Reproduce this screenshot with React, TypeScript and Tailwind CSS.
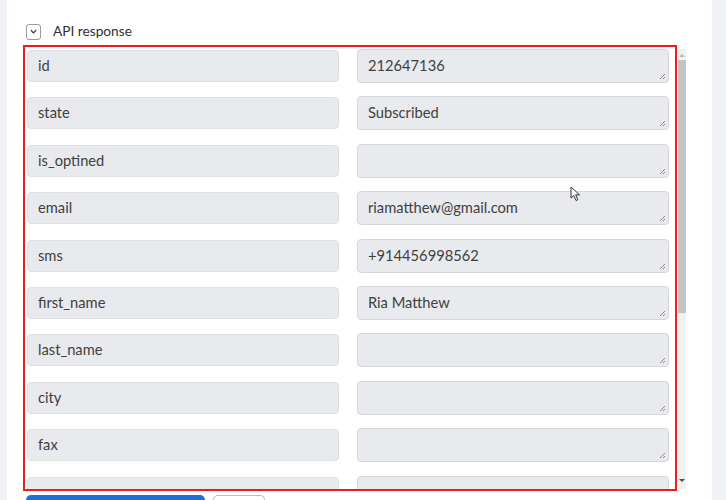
import React from "react";

const rows: [string, string][] = [
  ["id", "212647136"],
  ["state", "Subscribed"],
  ["is_optined", ""],
  ["email", "riamatthew@gmail.com"],
  ["sms", "+914456998562"],
  ["first_name", "Ria Matthew"],
  ["last_name", ""],
  ["city", ""],
  ["fax", ""],
  ["phone_1", ""],
];

function Grip() {
  return (
    <svg className="absolute right-[2px] bottom-[2px]" width="8" height="8" viewBox="0 0 8 8">
      <path d="M7 2 L2 7 M7 5 L5 7" stroke="#8a8a8a" strokeWidth="1" fill="none" />
    </svg>
  );
}

export default function App() {
  return (
    <div
      className="relative w-[726px] h-[500px] overflow-hidden bg-white flex text-[#3f3f3f]"
      style={{ fontFamily: "Lato, 'Open Sans', sans-serif" }}
    >
      <div className="w-[7px] h-full bg-[#f1f2f6] shrink-0" />
      <div className="flex-1 flex flex-col pl-[16px]">
        <div className="h-[45px] shrink-0 flex items-end pb-[3px]">
          <div className="flex items-center gap-[12px] ml-[3px]">
            <div className="w-[15px] h-[16px] border border-[#9a9a9a] rounded-[3px] flex items-center justify-center">
              <svg width="9" height="9" viewBox="0 0 10 10">
                <path d="M2 3.5 L5 6.5 L8 3.5" stroke="#333" strokeWidth="1.4" fill="none" />
              </svg>
            </div>
            <span className="text-[13.7px] text-[#2f2f2f]">API response</span>
          </div>
        </div>
        <div className="flex shrink-0">
          <div className="w-[654px] h-[446px] border-2 border-[#ee1c1c] overflow-hidden pl-[2px] pt-[2px]">
            <div className="flex flex-col gap-[13.4px]">
              {rows.map(([k, v]) => (
                <div key={k} className="flex gap-[18px] h-[34px] shrink-0">
                  <div className="w-[312px] h-[32px] mt-[1px] rounded-[4px] bg-[#e9eaee] border border-[#dfe0e4] flex items-center pl-[10px] pb-[2px] text-[14.7px]">
                    {k === "phone_1" ? "" : k}
                  </div>
                  <div className="relative w-[312px] h-[34px] rounded-[4px] bg-[#e9eaee] border border-[#d6d7db] flex items-center pl-[10px] pb-[2px] text-[14.7px]">
                    {v}
                    <Grip />
                  </div>
                </div>
              ))}
            </div>
          </div>
          <div className="w-[8px] h-[440px] mt-[4px] ml-[1px] bg-[#f1f1f1] flex flex-col items-center">
            <svg width="6" height="6" viewBox="0 0 6 6" className="mt-[3px]">
              <path d="M0 5 L3 2 L6 5 Z" fill="#b8b8b8" />
            </svg>
            <div className="w-[8px] h-[253px] mt-[2px] bg-[#c4c4c4]" />
            <div className="flex-1" />
            <svg width="6" height="6" viewBox="0 0 6 6" className="mb-[5px]">
              <path d="M0 1 L3 4 L6 1 Z" fill="#505050" />
            </svg>
          </div>
        </div>
        <div className="flex gap-[8px] mt-[4px] ml-[3px] shrink-0">
          <div className="w-[179px] h-[10px] rounded-t-[5px] bg-[#1d6fe0]" />
          <div className="w-[52px] h-[10px] rounded-t-[5px] border border-[#a9bfe6] border-b-0 bg-white" />
        </div>
      </div>
      <div className="w-[14px] h-full bg-[#f1f2f6] shrink-0" />
      <svg className="absolute left-[570px] top-[186px]" width="12" height="16" viewBox="0 0 12 16">
        <path d="M1 1 L1 12 L3.8 9.5 L6 14.5 L7.8 13.7 L5.7 8.8 L9.5 8.8 Z" fill="white" stroke="#333" strokeWidth="1" />
      </svg>
    </div>
  );
}
